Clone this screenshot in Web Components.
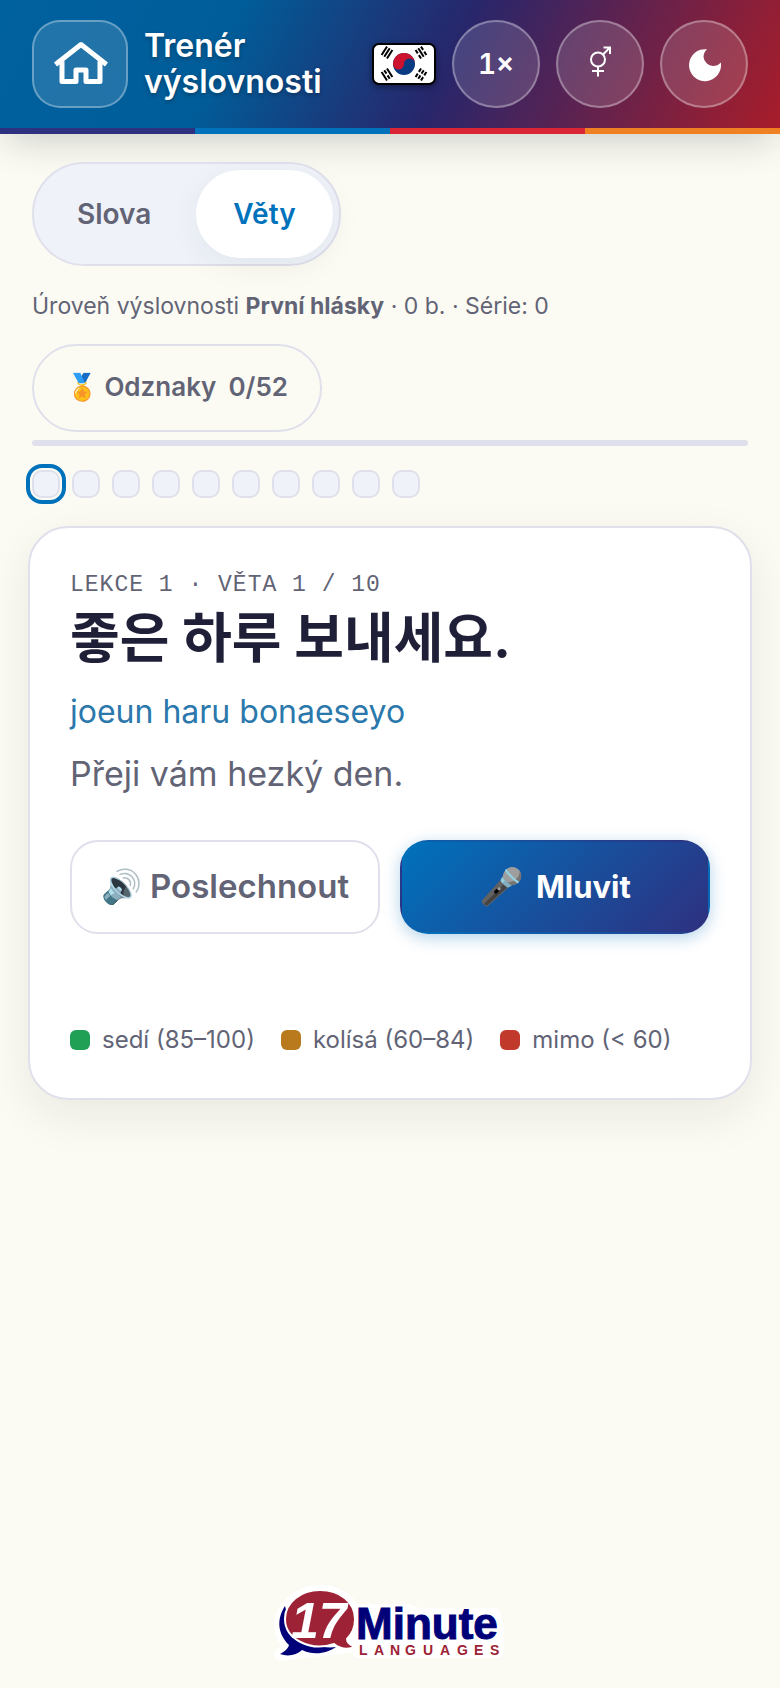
<!DOCTYPE html>
<html lang="cs">
  <head>
    <meta charset="UTF-8" />
    <meta name="viewport" content="width=device-width, initial-scale=1.0" />
    <title>Trenér výslovnosti</title>

    <style>
      :root {
        --ink: #1f1f38;
        --muted: #626476;
        --line: #e0e0ec;
        --soft: #eff3f9;
        --blue: #0072bc;
        --navy: #2e3080;
        --red: #d92534;
        --orange: #f08122;
      }

      body {
        margin: 0;
        background: #fbfbf3;
        color: var(--muted);
        font-family: Inter, "Noto Sans CJK KR", sans-serif;
        font-size: 24px;
      }
    </style>
  </head>
  <body>
    <trainer-app>
      <app-header slot="header">
        Trenér výslovnosti
        <round-button slot="actions" label="Rychlost">1×</round-button>
        <round-button slot="actions" label="Hlas">
          <svg width="36" height="36" viewBox="0 0 36 36" fill="none" stroke="#fff" stroke-width="2">
            <circle cx="16" cy="13.500" r="7" />
            <path d="M21 8.500L27.500 2M21.500 1.500H28V8M16 20.500V30.500M10 25H22" />
          </svg>
        </round-button>
        <round-button slot="actions" label="Tmavý režim">
          <svg width="36" height="36" viewBox="0 0 36 36">
            <path
              d="M21 3.300A16 16 0 1 0 34.800 16.500C33 19 30 20 27 20A10 10 0 0 1 17.500 11C17.500 8 19 5 21 3.300Z"
              fill="#fff"
            />
          </svg>
        </round-button>
      </app-header>

      <mode-switch></mode-switch>
      <level-status></level-status>
      <step-dots count="10" current="1"></step-dots>

      <lesson-card>
        <span slot="kicker">LEKCE 1 · VĚTA 1 / 10</span>
        <span slot="phrase" lang="ko">좋은 하루 보내세요.</span>
        <span slot="reading">joeun haru bonaeseyo</span>
        <span slot="meaning">Přeji vám hezký den.</span>
        <score-key slot="legend" color="#1fa055">sedí (85–100)</score-key>
        <score-key slot="legend" color="#b87a1c">kolísá (60–84)</score-key>
        <score-key slot="legend" color="#c0392b">mimo (&lt; 60)</score-key>
      </lesson-card>

      <brand-logo slot="footer"></brand-logo>
    </trainer-app>

    <template id="trainer-app">
      <style>
        :host {
          display: flex;
          flex-direction: column;
          min-height: 100vh;
        }
        main {
          display: flex;
          flex: 1;
          flex-direction: column;
          padding: 28px 32px;
        }
        footer {
          display: flex;
          justify-content: center;
          padding-bottom: 20px;
        }
      </style>
      <slot name="header"></slot>
      <main><slot></slot></main>
      <footer><slot name="footer"></slot></footer>
    </template>

    <template id="app-header">
      <style>
        :host {
          display: block;
          box-shadow: 0 12px 36px -6px rgba(20, 20, 40, 0.2);
        }
        header {
          display: flex;
          align-items: center;
          gap: 16px;
          padding: 20px 32px;
          background: linear-gradient(115deg, #00619f 0%, #005d99 29%, #28266b 57%, #a81d2a 100%);
        }
        .home {
          display: flex;
          flex: none;
          align-items: center;
          justify-content: center;
          box-sizing: border-box;
          width: 96px;
          height: 88px;
          border: 2px solid rgba(255, 255, 255, 0.32);
          border-radius: 28px;
          background: rgba(255, 255, 255, 0.13);
        }
        h1 {
          flex: 1;
          width: min-content;
          margin: 0;
          color: #fff;
          font-size: 32px;
          font-weight: 600;
          line-height: 36px;
          text-shadow: 0 2px 4px rgba(0, 0, 0, 0.3);
        }
        .flag {
          flex: none;
          filter: drop-shadow(0 2px 3px rgba(0, 0, 0, 0.4));
        }
        .stripe {
          display: grid;
          grid-template-columns: repeat(4, 1fr);
          height: 6px;
        }
      </style>
      <header>
        <a class="home" href="#" aria-label="Domů">
          <svg width="56" height="46" viewBox="0 0 56 46" fill="none" stroke="#fff" stroke-width="5" stroke-linecap="round" stroke-linejoin="round">
            <path d="M3.500 23.500L29 3.500L54.500 23.500" stroke-linecap="butt" />
            <path d="M10 21V40.500H24V29H34V40.500H48V21" />
          </svg>
        </a>
        <h1><slot></slot></h1>
        <svg class="flag" width="64" height="42" viewBox="0 0 64 42" role="img" aria-label="Korejština">
          <rect x="1" y="1" width="62" height="40" rx="6" fill="#fff" stroke="#000" stroke-width="2" />
          <circle cx="32" cy="21" r="11" fill="#0a3a82" />
          <path d="M21 21A11 11 0 0 1 43 21A5.500 5.500 0 0 0 32 21A5.500 5.500 0 0 1 21 21Z" fill="#cd1230" />
          <g stroke="#000" stroke-width="2">
            <path d="M-5 -3.200H5M-5 0H5M-5 3.200H5" transform="translate(15 9.500) rotate(-57)" />
            <path d="M-5 -3.200H-1M1 -3.200H5M-5 0H-1M1 0H5M-5 3.200H-1M1 3.200H5" transform="translate(49 31.500) rotate(-57)" />
            <path d="M-5 -3.200H-1M1 -3.200H5M-5 0H5M-5 3.200H-1M1 3.200H5" transform="translate(49 9.500) rotate(57)" />
            <path d="M-5 -3.200H5M-5 0H-1M1 0H5M-5 3.200H5" transform="translate(15 31.500) rotate(57)" />
          </g>
        </svg>
        <slot name="actions"></slot>
      </header>
      <div class="stripe">
        <span style="background: var(--navy)"></span>
        <span style="background: var(--blue)"></span>
        <span style="background: var(--red)"></span>
        <span style="background: var(--orange)"></span>
      </div>
    </template>

    <template id="round-button">
      <style>
        :host {
          display: block;
          flex: none;
        }
        button {
          display: flex;
          align-items: center;
          justify-content: center;
          width: 88px;
          height: 88px;
          padding: 0;
          border: 2px solid rgba(255, 255, 255, 0.32);
          border-radius: 50%;
          background: rgba(255, 255, 255, 0.14);
          color: #fff;
          font: 600 28px Inter, sans-serif;
          font-variant-numeric: tabular-nums;
        }
      </style>
      <button type="button"><slot></slot></button>
    </template>

    <template id="mode-switch">
      <style>
        :host {
          display: flex;
          align-self: flex-start;
          gap: 8px;
          padding: 6px;
          border: 2px solid var(--line);
          border-radius: 52px;
          background: var(--soft);
        }
        button {
          height: 88px;
          padding: 0 37px;
          border: 0;
          border-radius: 44px;
          background: none;
          color: var(--muted);
          font: 600 28px Inter, sans-serif;
        }
        button[aria-pressed="true"] {
          background: #fff;
          box-shadow: 0 8px 32px rgba(20, 20, 50, 0.06);
          color: var(--blue);
        }
      </style>
      <button type="button" aria-pressed="false">Slova</button>
      <button type="button" aria-pressed="true">Věty</button>
    </template>

    <template id="level-status">
      <style>
        :host {
          display: flex;
          flex-direction: column;
          align-items: flex-start;
          margin-top: 20px;
        }
        p {
          margin: 0 0 18px;
          font-size: 23px;
          line-height: 40px;
        }
        button {
          display: flex;
          align-items: center;
          gap: 6px;
          height: 88px;
          padding: 0 32px 4px;
          border: 2px solid var(--line);
          border-radius: 44px;
          background: none;
          color: var(--muted);
          font: 600 26px Inter, "Noto Color Emoji", sans-serif;
        }
        .count {
          margin-left: 6px;
        }
        .bar {
          width: 100%;
          height: 6px;
          margin-top: 8px;
          border-radius: 3px;
          background: var(--line);
        }
      </style>
      <p>Úroveň výslovnosti <b>První hlásky</b> · 0 b. · Série: 0</p>
      <button type="button">
        <span>🏅</span><span>Odznaky</span><span class="count">0/52</span>
      </button>
      <div class="bar"></div>
    </template>

    <template id="step-dots">
      <style>
        :host {
          display: flex;
          gap: 12px;
          margin-top: 24px;
        }
        button {
          width: 28px;
          height: 28px;
          padding: 0;
          border: 2px solid var(--line);
          border-radius: 10px;
          background: var(--soft);
        }
        button[aria-current] {
          outline: 4px solid var(--blue);
          outline-offset: 2px;
        }
      </style>
    </template>

    <template id="lesson-card">
      <style>
        :host {
          display: block;
          margin: 28px -4px 0;
          padding: 40px;
          border: 2px solid var(--line);
          border-radius: 40px;
          background: #fff;
          box-shadow: 0 16px 48px rgba(20, 20, 40, 0.08);
        }
        p,
        h2 {
          margin: 0;
        }
        .kicker {
          font: 23px/34px "Liberation Mono", monospace;
          letter-spacing: 1px;
        }
        h2 {
          color: var(--ink);
          font-size: 54px;
          font-weight: 700;
          line-height: 74px;
        }
        .reading {
          margin-top: 14px;
          color: #2b78ac;
          font-size: 32px;
          line-height: 44px;
        }
        .meaning {
          margin-top: 16px;
          font-size: 34px;
          line-height: 48px;
        }
        .actions {
          display: grid;
          grid-template-columns: 1fr 1fr;
          gap: 20px;
          margin-top: 42px;
        }
        button {
          display: flex;
          align-items: center;
          justify-content: center;
          gap: 8px;
          height: 94px;
          padding: 0 0 2px;
          border: 2px solid var(--line);
          border-radius: 28px;
          background: #fff;
          color: var(--muted);
          font: 600 33px Inter, "Noto Color Emoji", sans-serif;
        }
        .speak {
          gap: 12px;
          border-color: transparent;
          background: linear-gradient(135deg, var(--blue), var(--navy));
          box-shadow: 0 4px 16px rgba(0, 114, 188, 0.3);
          color: #fff;
          font-size: 31px;
          font-weight: 700;
        }
        .speak .icon {
          font-size: 36px;
        }
        .legend {
          display: flex;
          flex-wrap: wrap;
          gap: 8px 26px;
          margin-top: 88px;
        }
      </style>
      <p class="kicker"><slot name="kicker"></slot></p>
      <h2><slot name="phrase"></slot></h2>
      <p class="reading"><slot name="reading"></slot></p>
      <p class="meaning"><slot name="meaning"></slot></p>
      <div class="actions">
        <button type="button"><span class="icon">🔊</span>Poslechnout</button>
        <button type="button" class="speak"><span class="icon">🎤</span>Mluvit</button>
      </div>
      <div class="legend"><slot name="legend"></slot></div>
    </template>

    <template id="score-key">
      <style>
        :host {
          display: flex;
          align-items: center;
          gap: 12px;
          line-height: 36px;
        }
        i {
          width: 20px;
          height: 20px;
          border-radius: 6px;
        }
      </style>
      <i></i><span><slot></slot></span>
    </template>

    <template id="brand-logo">
      <style>
        :host {
          display: block;
        }
        svg {
          display: block;
        }
        .minute {
          fill: #000078;
          stroke: #000078;
          font: 700 44px "Liberation Sans", sans-serif;
        }
        .languages {
          fill: #9d2235;
          font: 700 14px "Liberation Sans", sans-serif;
        }
        .number {
          fill: #fff;
          font: italic 700 50px "Liberation Sans", sans-serif;
        }
      </style>
      <svg width="244" height="90" viewBox="0 0 244 90">
        <g stroke="#fff" stroke-width="12" stroke-linejoin="round" fill="#fff">
          <path d="M18 30C9 42 10 58 21 68L12 77L34 74L72 70L86 68L87 42C87 25 73 13 52 13C35 13 23 22 18 30Z" />
          <path d="M90 32H140L150 36H226L230 50V74H90Z" />
        </g>
        <path d="M17 28C8 42 10 56 21 67C20 71 16 74 12 76C20 79 29 77 34 72C46 78 60 75 68 69C46 72 24 58 17 28Z" fill="#000078" />
        <path d="M52 12C72 12 87 24 87 41C87 49 84 56 79 61C79 65 82 67 87 69C79 72 71 70 66 66C42 74 17 61 17 41C17 24 33 12 52 12Z" fill="#9d2235" stroke="#fff" stroke-width="2" />
        <text class="number" x="23" y="60">17</text>
        <text>
          <tspan class="minute" x="88" y="61">Minute</tspan>
          <tspan class="languages" x="91 106 122 137 155 172 189 206 222" y="77">LANGUAGES</tspan>
        </text>
      </svg>
    </template>

    <script type="module">
      class TemplateElement extends HTMLElement {
        constructor() {
          super();
          this.attachShadow({ mode: "open" });
        }

        connectedCallback() {
          const tmp = document.getElementById(this.localName);
          this.shadowRoot.replaceChildren(tmp.content.cloneNode(true));
          this.render();
        }

        render() {}
      }

      class RoundButton extends TemplateElement {
        render() {
          this.shadowRoot
            .querySelector("button")
            .setAttribute("aria-label", this.getAttribute("label"));
        }
      }

      class ModeSwitch extends TemplateElement {
        render() {
          const buttons = this.shadowRoot.querySelectorAll("button");
          buttons.forEach((btn) =>
            btn.addEventListener("click", () => {
              buttons.forEach((b) => b.setAttribute("aria-pressed", b === btn));
            })
          );
        }
      }

      class StepDots extends TemplateElement {
        render() {
          const count = Number(this.getAttribute("count"));
          const current = Number(this.getAttribute("current"));
          for (let i = 1; i <= count; i++) {
            const dot = document.createElement("button");
            dot.type = "button";
            dot.setAttribute("aria-label", `Věta ${i}`);
            if (i === current) dot.setAttribute("aria-current", "step");
            this.shadowRoot.appendChild(dot);
          }
        }
      }

      class ScoreKey extends TemplateElement {
        render() {
          this.shadowRoot.querySelector("i").style.background =
            this.getAttribute("color");
        }
      }

      customElements.define("trainer-app", class extends TemplateElement {});
      customElements.define("app-header", class extends TemplateElement {});
      customElements.define("round-button", RoundButton);
      customElements.define("mode-switch", ModeSwitch);
      customElements.define("level-status", class extends TemplateElement {});
      customElements.define("step-dots", StepDots);
      customElements.define("lesson-card", class extends TemplateElement {});
      customElements.define("score-key", ScoreKey);
      customElements.define("brand-logo", class extends TemplateElement {});
    </script>
  </body>
</html>
